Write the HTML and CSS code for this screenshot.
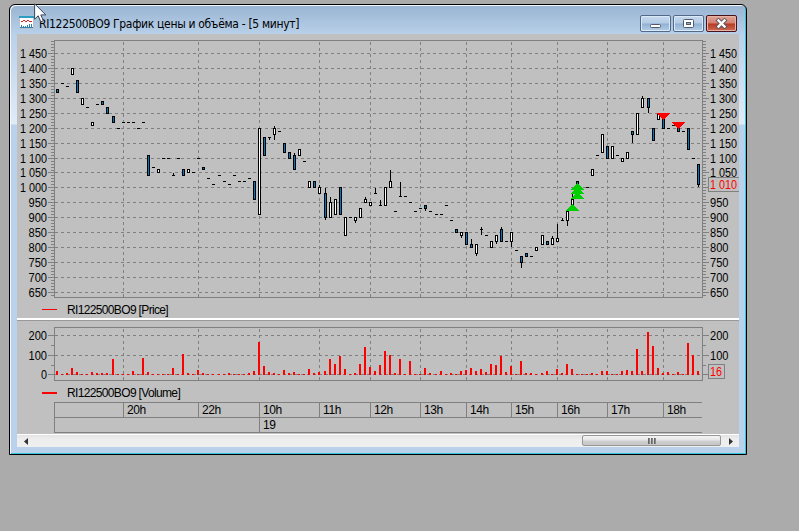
FILE: index.html
```html
<!DOCTYPE html>
<html lang="ru">
<head>
    <meta charset="UTF-8">
    <meta name="viewport" content="width=device-width, initial-scale=1.0">
    <title>RI122500BO9 График цены и объёма</title>
    <link rel="stylesheet" href="styles.css">
</head>
<body>
    <div class="window">
        <header class="titlebar">
            <svg class="app-icon" width="15" height="13" viewBox="0 0 15 13" shape-rendering="crispEdges">
                <rect width="15" height="13" fill="#fff"/>
                <rect width="15" height="2" fill="#2f9cc4"/>
                <path d="M.5 2v10.5h14V2" fill="none" stroke="#b9c3cc"/>
                <path d="M2 5.5h2m0-1h2m0 1h2m0-1h2m0 1h3" stroke="#e02020" fill="none"/>
                <path d="M2.5 12V9M4.5 12v-2M6.5 12v-2M8.5 12V9M10.5 12V8M12.5 12V8" stroke="#2f7fb0"/>
                <path d="M1 11.5h13" stroke="#2f7fb0"/>
            </svg>
            <h1 class="title">RI122500BO9 График цены и объёма - [5 минут]</h1>
            <div class="buttons">
                <button class="btn" aria-label="Свернуть">
                    <svg width="13" height="11" viewBox="0 0 13 11"><rect x="1.5" y="6.5" width="10" height="3" rx="1" fill="#fff" stroke="#52586a"/></svg>
                </button>
                <button class="btn" aria-label="Развернуть">
                    <svg width="13" height="11" viewBox="0 0 13 11"><rect x="1.5" y="1.5" width="10" height="8" rx="1" fill="#fff" stroke="#52586a"/><rect x="4.5" y="4.5" width="4" height="2" fill="#8fb2d8" stroke="#52586a"/></svg>
                </button>
                <button class="btn btn-close" aria-label="Закрыть">
                    <svg width="13" height="11" viewBox="0 0 13 11"><path d="M3.5 2.5l6 6M9.5 2.5l-6 6" stroke="#5b5560" stroke-width="4.2" stroke-linecap="square"/><path d="M3.5 2.5l6 6M9.5 2.5l-6 6" stroke="#fff" stroke-width="2.4" stroke-linecap="square"/></svg>
                </button>
            </div>
        </header>
        <main class="client">
            <svg class="chart" id="price" width="722" height="266" viewBox="17 34 722 266"></svg>
            <div class="legend legend-price"><i class="key"></i>RI122500BO9 [Price]</div>
            <div class="splitter"></div>
            <svg class="chart" id="volume" width="722" height="63" viewBox="17 321 722 63"></svg>
            <div class="legend legend-volume"><i class="key"></i>RI122500BO9 [Volume]</div>
            <div class="timeline">
                <div class="hours">
                    <span></span><span>20h</span><span>22h</span><span>10h</span><span>11h</span><span>12h</span><span>13h</span><span>14h</span><span>15h</span><span>16h</span><span>17h</span><span>18h</span>
                </div>
                <div class="days"><span></span><span>19</span></div>
            </div>
            <div class="scrollbar">
                <span class="arrow"><svg width="4" height="7" viewBox="0 0 4 7"><path d="M4 0v7L0 3.5z" fill="#333"/></svg></span>
                <div class="track"><div class="thumb"><i></i><i></i><i></i></div></div>
                <span class="arrow"><svg width="4" height="7" viewBox="0 0 4 7"><path d="M0 0v7l4-3.5z" fill="#333"/></svg></span>
            </div>
        </main>
    </div>
    <svg class="cursor" width="14" height="21" viewBox="0 0 14 21">
        <path d="M.6 .8v15.4l3.6-3.4 2.6 6 2.6-1.1-2.6-5.8h5z" fill="#fff" stroke="#3c4658" stroke-width="1"/>
    </svg>
    <script src="script.js"></script>
</body>
</html>
```

FILE: styles.css
```css
* {
    box-sizing: border-box;
}
body {
    margin: 0;
    height: 531px;
    padding: 4px 0 0 9px;
    overflow: hidden;
    background-color: #ababab;
    font-family: "Liberation Sans", Arial, sans-serif;
    font-size: 12px;
    color: #000;
}
.window {
    width: 738px;
    height: 451px;
    padding: 0 7px;
    border: 1px solid #000;
    border-radius: 6px 6px 0 0;
    background: linear-gradient(#99b4d1 0, #b9d1ea 30px, #e1ebf8 119px, #b9d1ea 120px);
    box-shadow: inset 1px 1px 0 #f4f8fc, inset -1px -1px 0 #35c3dc;
}
.titlebar {
    display: flex;
    align-items: center;
    height: 29px;
    padding: 5px 2px 0 2px;
}
.app-icon {
    margin-top: 1px;
}
.title {
    flex: 1;
    margin: 3px 0 0 5px;
    font-family: "DejaVu Sans Condensed", "DejaVu Sans", sans-serif;
    font-size: 12px;
    font-stretch: condensed;
    font-weight: normal;
    letter-spacing: -0.32px;
    white-space: nowrap;
}
.buttons {
    display: flex;
    gap: 2px;
    margin-top: 2px;
}
.btn {
    display: flex;
    align-items: center;
    justify-content: center;
    width: 31px;
    height: 17px;
    padding: 0;
    border: 1px solid #53698a;
    border-radius: 2px;
    background: linear-gradient(#c6d9ee 0, #b4cbe5 48%, #91b0d2 52%, #b3cee9 100%);
    box-shadow: inset 0 0 0 1px #dbe8f5;
}
.btn-close {
    border-color: #4a1118;
    background: linear-gradient(#e3a597 0, #d27f70 48%, #b73a25 52%, #cd6a50 100%);
    box-shadow: inset 0 0 0 1px #e6b3a8;
}

.client {
    display: flex;
    flex-direction: column;
    width: 722px;
    height: 413px;
    background-color: #c0c0c0;
}
.chart {
    display: block;
    flex: none;
}
.chart text {
    font-family: "Liberation Sans", Arial, sans-serif;
    font-size: 12.5px;
}
.legend {
    display: flex;
    align-items: center;
    padding-left: 25px;
    letter-spacing: -0.65px;
}
.legend-price {
    height: 18px;
    padding-bottom: 1px;
    padding-top: 2px;
}
.legend-volume {
    height: 18px;
}
.key {
    width: 15px;
    height: 1px;
    margin-right: 10px;
    background-color: #f00;
}
.legend-volume .key {
    height: 2px;
}
.splitter {
    height: 3px;
    border-top: 2px solid #fff;
    border-bottom: 1px solid #999;
}

.timeline {
    width: 648px;
    margin-left: 37px;
    border: 1px solid #808080;
    border-right: 0;
    letter-spacing: -0.4px;
}
.hours,
.days {
    display: grid;
    height: 14px;
    line-height: 15px;
}
.hours {
    grid-template-columns: 68px 75px 61px 60px 51px 50px 46px 45px 46px 50px 56px 39px;
    height: 15px;
    border-bottom: 1px solid #808080;
}
.days {
    grid-template-columns: 204px 1fr;
}
.timeline span + span {
    padding-left: 3px;
    border-left: 1px solid #808080;
}

.scrollbar {
    display: flex;
    height: 13px;
    margin-top: auto;
    border-top: 1px solid #fff;
    background: linear-gradient(#e3e3e3, #eee 4px, #efefef);
}
.arrow {
    display: flex;
    align-items: center;
    justify-content: center;
    width: 17px;
}
.track {
    flex: 1;
    display: flex;
    justify-content: flex-end;
}
.thumb {
    display: flex;
    align-items: center;
    justify-content: center;
    gap: 1px;
    width: 139px;
    height: 11px;
    margin-right: 1px;
    border: 1px solid #979797;
    border-radius: 2px;
    background: linear-gradient(#f5f5f5, #e6e6e6 45%, #d0d0d3 55%, #c5c5c8);
}
.thumb i {
    width: 2px;
    height: 6px;
    background: linear-gradient(90deg, #555, #999);
}
/* mouse pointer lies over the title bar */
.cursor {
    position: absolute;
    left: 34px;
    top: 3px;
}
```

FILE: script.js
```js
const LEFT = 54, RIGHT = 702;
const hourLines = [123, 198, 259, 319, 370, 420, 466, 511, 557, 607, 663];

// level -> y of the price grid
const priceLevels = [
    [1450, 53], [1400, 68], [1350, 83], [1300, 98], [1250, 113], [1200, 128], [1150, 143], [1100, 158], [1050, 172],
    [1000, 187], [950, 202], [900, 217], [850, 232], [800, 247], [750, 262], [700, 277], [650, 292]
];
const volumeLevels = [[200, 335], [100, 355], [0, 374]];

// x, body top, body bottom, type (u - up, d - down, n - no body), wick top, wick bottom
const candles = [
    [57, 89, 92, 'd'], [62, 83, 83, 'n'], [67, 86, 86, 'n'], [72, 68, 74, 'u'], [77, 80, 92, 'd'], [82, 98, 104, 'u'],
    [87, 107, 107, 'n'], [92, 122, 125, 'u'], [97, 104, 104, 'n'], [102, 101, 104, 'd'], [107, 107, 113, 'd'],
    [113, 116, 122, 'd'], [118, 128, 128, 'n'], [123, 122, 122, 'n'], [128, 122, 122, 'n'], [133, 122, 122, 'n'],
    [138, 128, 128, 'n'], [143, 122, 122, 'n'], [148, 155, 175, 'd'], [153, 167, 167, 'n'], [158, 169, 172, 'u'],
    [163, 158, 158, 'n'], [168, 158, 158, 'n'], [173, 175, 175, 'n', 173, 175], [178, 158, 158, 'n'],
    [183, 169, 175, 'd'], [188, 169, 172, 'u'], [193, 172, 172, 'n'], [198, 158, 158, 'n'], [203, 167, 169, 'd'],
    [208, 178, 178, 'n'], [213, 184, 184, 'n'], [219, 175, 175, 'n'], [224, 181, 181, 'n'], [229, 184, 184, 'n'],
    [234, 175, 175, 'n'], [239, 181, 181, 'n'], [244, 181, 181, 'n'], [249, 178, 178, 'n'], [254, 181, 199, 'd'],
    [259, 128, 214, 'u'], [264, 137, 155, 'd'], [269, 137, 137, 'n', 137, 139], [274, 128, 134, 'u', 126, 139],
    [279, 131, 131, 'n'], [284, 143, 152, 'd'], [289, 152, 158, 'd'], [294, 155, 169, 'd', 153, 169],
    [299, 149, 155, 'u'], [304, 161, 161, 'n'], [309, 181, 187, 'u'], [314, 181, 187, 'd'], [319, 187, 193, 'u', 185, 193],
    [325, 193, 217, 'd', 188, 219], [330, 202, 217, 'u', 197, 217], [335, 199, 214, 'u'], [340, 187, 214, 'd'],
    [345, 217, 235, 'u'], [350, 217, 217, 'n'], [355, 217, 220, 'u', 217, 222], [360, 208, 217, 'u'],
    [365, 199, 202, 'u', 197, 202], [370, 202, 205, 'u'], [375, 193, 193, 'n', 188, 193], [380, 205, 205, 'n', 200, 205],
    [385, 187, 205, 'u'], [390, 181, 187, 'u', 170, 187], [395, 211, 211, 'n'], [400, 196, 196, 'n', 182, 196],
    [405, 196, 196, 'n'], [410, 202, 202, 'n'], [415, 211, 211, 'n'], [420, 208, 208, 'n'], [425, 205, 208, 'd', 205, 210],
    [430, 211, 211, 'n'], [436, 214, 214, 'n'], [441, 214, 214, 'n'], [446, 205, 205, 'n'], [451, 220, 220, 'n'],
    [456, 229, 232, 'd'], [461, 232, 235, 'u', 232, 237], [466, 232, 244, 'd'], [471, 244, 247, 'd', 239, 247],
    [476, 244, 253, 'u', 244, 255], [481, 229, 229, 'n', 227, 234], [486, 235, 235, 'n'], [491, 241, 247, 'u'],
    [496, 235, 241, 'u', 235, 243], [501, 229, 241, 'd', 227, 241], [506, 241, 241, 'n'], [511, 232, 241, 'u', 232, 246],
    [516, 250, 250, 'n'], [521, 256, 262, 'd', 256, 267], [526, 253, 256, 'd'], [531, 256, 256, 'n'], [536, 247, 250, 'u'],
    [542, 235, 244, 'u'], [547, 241, 244, 'd'], [552, 238, 244, 'u', 236, 244], [557, 238, 241, 'u', 224, 241],
    [562, 220, 220, 'n', 218, 220], [567, 211, 220, 'u', 211, 225], [572, 199, 208, 'u', 194, 208], [577, 181, 190, 'd'],
    [587, 187, 187, 'n'], [592, 169, 175, 'u'], [597, 155, 155, 'n'], [602, 134, 152, 'u'], [607, 146, 158, 'd'],
    [612, 146, 158, 'u'], [617, 155, 155, 'n'], [622, 158, 161, 'u'], [627, 152, 158, 'u'], [632, 131, 134, 'd', 131, 142],
    [637, 113, 134, 'u'], [642, 98, 107, 'u', 96, 107], [648, 98, 107, 'd', 98, 112], [653, 128, 140, 'd'],
    [658, 114, 119, 'u'], [663, 116, 128, 'd'], [668, 128, 128, 'n'], [673, 125, 125, 'n'], [678, 122, 131, 'd'],
    [683, 131, 131, 'n'], [688, 128, 149, 'd'], [693, 158, 158, 'n'], [698, 164, 184, 'd', 164, 186]
];

// x, bar height
const volumes = [
    [57, 4], [62, 1], [67, 2], [72, 7], [77, 3], [82, 1], [87, 1], [92, 3], [97, 2], [102, 2], [107, 2], [113, 16],
    [118, 1], [123, 1], [128, 1], [133, 4], [138, 1], [143, 17], [148, 3], [153, 1], [158, 1], [163, 1], [168, 1],
    [173, 7], [178, 1], [183, 21], [188, 2], [193, 1], [198, 5], [203, 2], [208, 1], [213, 1], [219, 1], [224, 1],
    [229, 2], [234, 1], [239, 1], [244, 1], [249, 2], [254, 4], [259, 33], [264, 9], [269, 3], [274, 2], [279, 1],
    [284, 5], [289, 2], [294, 3], [299, 1], [304, 1], [309, 6], [314, 2], [319, 3], [325, 4], [330, 16], [335, 11],
    [340, 19], [345, 6], [350, 1], [355, 2], [360, 11], [365, 28], [370, 8], [375, 4], [380, 10], [385, 24], [390, 20],
    [395, 2], [400, 16], [405, 1], [410, 14], [415, 1], [420, 1], [425, 7], [430, 2], [436, 1], [441, 4], [446, 1],
    [451, 2], [456, 1], [461, 4], [466, 5], [471, 7], [476, 4], [481, 6], [486, 3], [491, 11], [496, 10], [501, 19],
    [506, 3], [511, 9], [516, 1], [521, 14], [526, 2], [531, 2], [536, 1], [542, 2], [547, 4], [552, 1], [557, 6],
    [562, 2], [567, 11], [572, 6], [577, 1], [582, 1], [587, 1], [592, 2], [597, 1], [602, 4], [607, 4], [612, 1],
    [617, 1], [622, 4], [627, 5], [632, 4], [637, 26], [642, 4], [648, 43], [653, 29], [658, 7], [663, 2], [668, 3],
    [673, 1], [678, 3], [683, 1], [688, 32], [693, 20], [698, 4]
];

function rect(x, y, w, h, fill) {
    return `<rect x="${x}" y="${y}" width="${w}" height="${h}" fill="${fill}" shape-rendering="crispEdges"/>`;
}

function label(x, y, value, fill = '#000') {
    const text = value >= 1000 ? '1 ' + String(value).slice(1) : String(value);
    const width = { 5: 27, 3: 18.5, 2: 12, 1: 6 }[text.length];
    return `<text x="${x === 'left' ? 47 - width : x}" y="${y}" textLength="${width}" lengthAdjust="spacingAndGlyphs" fill="${fill}">${text}</text>`;
}

function tick(y, len) {
    return rect(LEFT - len, y, len, 1, '#808080') + rect(RIGHT + 1, y, len, 1, '#808080');
}

function frame(top, bottom, levels) {
    let out = '';
    for (const [, y] of levels) {
        out += `<path d="M55 ${y + 0.5}H702" stroke="#808080" stroke-dasharray="3 3" shape-rendering="crispEdges"/>`;
        out += tick(y, 6);
    }
    for (const x of hourLines) {
        out += `<path d="M${x + 0.5} ${top + 2}V${bottom}" stroke="#808080" stroke-dasharray="3 3" shape-rendering="crispEdges"/>`;
    }
    out += `<rect x="54.5" y="${top + 0.5}" width="648" height="${bottom - top}" fill="none" stroke="#808080" shape-rendering="crispEdges"/>`;
    return out;
}

function drawPrice() {
    let out = frame(40, 297, priceLevels);
    for (const [value, y] of priceLevels) {
        for (let i = 1; i < 5; i++) {
            out += tick(y + i * 3 < 297 ? y + i * 3 : y, 3);
        }
        out += label('left', y + 5, value);
        if (value !== 1000) out += label(710, y + 5, value);
    }
    for (const y of [41, 44, 47, 50]) out += tick(y, 3);

    for (const [x, top, bottom, type, high, low] of candles) {
        if (high) out += rect(x, high, 1, low - high + 1, '#000');
        out += rect(x - 1, top, 3, bottom - top + 1, '#000');
        if (type !== 'n') out += rect(x, top + 1, 1, bottom - top - 1, type === 'u' ? '#fff' : '#0078be');
    }

    // buys
    for (const [x, y] of [[577.5, 192], [577.5, 187], [577.5, 183], [572.5, 204]]) {
        out += `<path d="M${x} ${y - 0.5}l7 7.5h-14z" fill="#00d000" shape-rendering="crispEdges"/>`;
    }
    // sells
    for (const [x, y] of [[663.5, 113], [678.5, 122]]) {
        out += `<path d="M${x - 7} ${y}h14l-7 7.5z" fill="#f00" shape-rendering="crispEdges"/>`;
    }

    out += '<rect x="708.5" y="177.5" width="36" height="14" fill="#c0c0c0" stroke="#808080" shape-rendering="crispEdges"/>';
    out += label(710, 189, 1010, '#f00');
    document.getElementById('price').innerHTML = out;
}

function drawVolume() {
    let out = frame(327, 380, volumeLevels);
    out += tick(345, 3) + tick(365, 3);
    for (const [value, y] of volumeLevels) {
        out += label('left', y + 5, value);
        if (value) out += label(710, y + 5, value);
    }
    for (const [x, h] of volumes) out += rect(x - 1, 375 - h, 2, h, '#f00');
    out += '<rect x="708.5" y="364.5" width="16" height="14" fill="#c0c0c0" stroke="#808080" shape-rendering="crispEdges"/>';
    out += label(710, 376, 16, '#f00');
    document.getElementById('volume').innerHTML = out;
}

drawPrice();
drawVolume();
```
